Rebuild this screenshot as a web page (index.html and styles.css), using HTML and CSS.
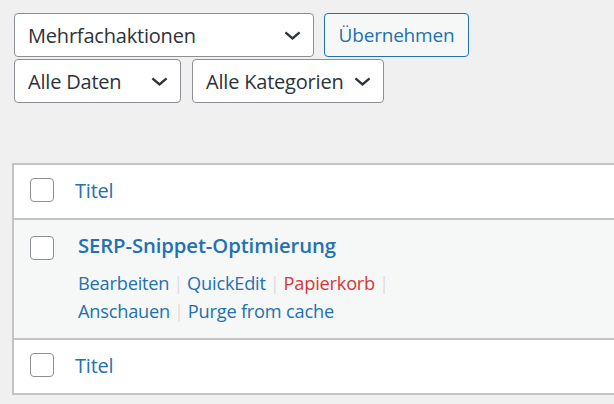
FILE: index.html
```html
<!DOCTYPE html>
<html lang="de">
<head>
<meta charset="utf-8">
<link rel="stylesheet" href="styles.css">
</head>
<body>
<div class="page">
  <div class="tablenav">
    <div class="row">
      <div class="select select-bulk"><span>Mehrfachaktionen</span><svg class="chev" viewBox="0 0 18 9"><path d="M1.5 1.2 L9 7.6 L16.5 1.2" fill="none" stroke="#2c3338" stroke-width="2.4"/></svg></div>
      <div class="button">Übernehmen</div>
    </div>
    <div class="row row2">
      <div class="select select-date"><span>Alle Daten</span><svg class="chev" viewBox="0 0 18 9"><path d="M1.5 1.2 L9 7.6 L16.5 1.2" fill="none" stroke="#2c3338" stroke-width="2.4"/></svg></div>
      <div class="select select-cat"><span>Alle Kategorien</span><svg class="chev" viewBox="0 0 18 9"><path d="M1.5 1.2 L9 7.6 L16.5 1.2" fill="none" stroke="#2c3338" stroke-width="2.4"/></svg></div>
    </div>
  </div>

  <div class="table">
    <div class="tr head">
      <div class="cb"><span class="check"></span></div>
      <div class="col-title"><a class="sort">Titel</a></div>
    </div>
    <div class="tr body">
      <div class="cb"><span class="check"></span></div>
      <div class="col-title cell">
        <a class="row-title">SERP-Snippet-Optimierung</a>
        <div class="actions">
          <div class="line"><a>Bearbeiten</a><i class="sep">|</i><a>QuickEdit</a><i class="sep">|</i><a class="trash">Papierkorb</a><i class="sep">|</i></div>
          <div class="line"><a>Anschauen</a><i class="sep">|</i><a>Purge from cache</a></div>
        </div>
      </div>
    </div>
    <div class="tr foot">
      <div class="cb"><span class="check"></span></div>
      <div class="col-title"><a class="sort">Titel</a></div>
    </div>
  </div>
</div>
</body>
</html>
```
FILE: styles.css
```css
html, body {
  margin: 0;
  padding: 0;
  background: #f0f0f1;
}
body {
  font-family: "Open Sans", "Noto Sans", sans-serif;
  font-size: 20px;
  color: #2c3338;
  width: 614px;
  height: 404px;
  overflow: hidden;
}
.page {
  padding: 13px 0 0 0;
}
.tablenav {
  padding-left: 14px;
}
.row {
  display: flex;
  gap: 10px;
}
.row2 {
  margin-top: 2px;
  gap: 11px;
}
.select {
  box-sizing: border-box;
  height: 44px;
  border: 1.5px solid #8c8f94;
  border-radius: 4px;
  background: #fff;
  display: flex;
  align-items: center;
  justify-content: space-between;
  padding: 0 12px 0 13px;
  color: #2c3338;
  letter-spacing: -0.2px;
}
.select-bulk { width: 300px; }
.select-date { width: 167px; }
.select-cat { width: 192px; }
.chev {
  width: 17px;
  height: 9px;
  flex: none;
}
.button {
  box-sizing: border-box;
  height: 44px;
  width: 145px;
  border: 1.5px solid #2271b1;
  border-radius: 4px;
  background: #f6f7f7;
  color: #2271b1;
  display: flex;
  align-items: center;
  justify-content: center;
  font-size: 19px;
  letter-spacing: -0.2px;
}
.table {
  margin-top: 60px;
  margin-left: 12px;
  width: 602px;
  box-sizing: border-box;
  border: 2px solid #c3c4c7;
  border-right: none;
  background: #fff;
}
.tr {
  display: flex;
}
.head, .foot {
  height: 53px;
  align-items: center;
}
.head {
  border-bottom: 2px solid #c3c4c7;
}
.foot {
  border-top: 2px solid #c3c4c7;
}
.body {
  background: #f6f7f7;
  height: 118px;
  align-items: flex-start;
}
.cb {
  width: 61px;
  flex: none;
  padding-left: 16px;
  box-sizing: border-box;
  display: flex;
}
.head .cb, .foot .cb {
  margin-top: -3px;
}
.head .col-title, .foot .col-title {
  margin-top: -3px;
}
.body .cb {
  padding-top: 16px;
}
.check {
  box-sizing: border-box;
  width: 24px;
  height: 24px;
  border: 1.5px solid #8c8f94;
  border-radius: 4px;
  background: #fff;
  display: block;
}
.sort {
  color: #2271b1;
  letter-spacing: -0.2px;
}
.cell {
  padding-left: 3px;
  padding-top: 11px;
}
.row-title {
  display: block;
  color: #2271b1;
  font-weight: 600;
  font-size: 20.3px;
  letter-spacing: -0.1px;
  line-height: 28px;
}
.actions {
  margin-top: 10px;
  line-height: 28px;
  font-size: 18.2px;
  letter-spacing: -0.2px;
}
.line {
  white-space: nowrap;
}
.actions a {
  color: #2271b1;
}
.actions a.trash {
  color: #d63638;
}
.sep {
  font-style: normal;
  color: #dcdcde;
  padding: 0 4px;
}
```
